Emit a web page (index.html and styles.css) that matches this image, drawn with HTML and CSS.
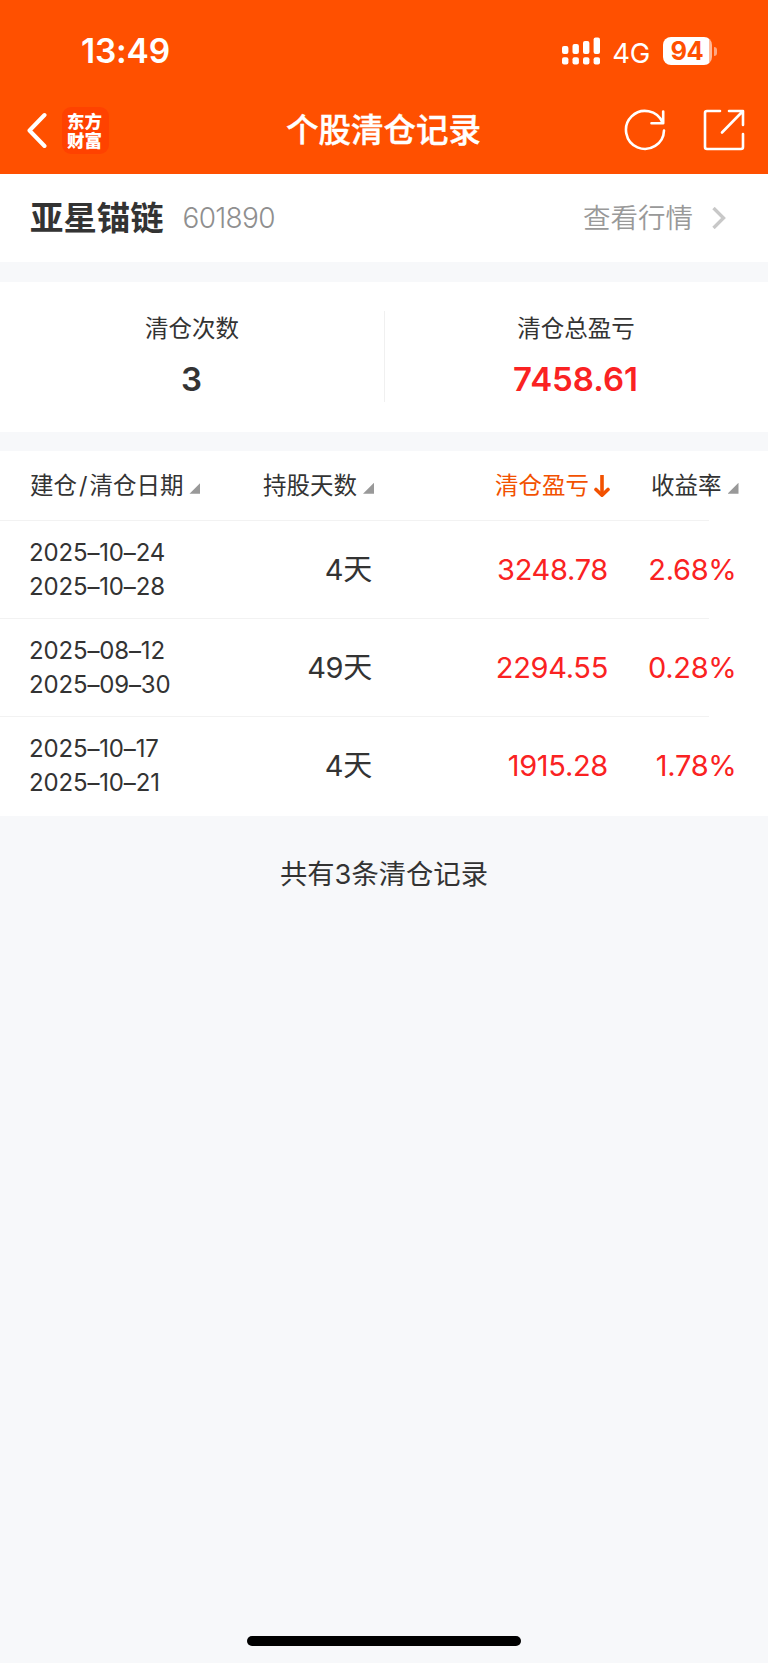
FILE: index.html
```html
<!DOCTYPE html>
<html lang="zh-CN">
<head>
    <meta charset="UTF-8">
    <meta name="viewport" content="width=device-width, initial-scale=1.0">
    <title>个股清仓记录</title>
    <link rel="stylesheet" href="styles.css">
</head>
<body>
    <header>
        <div class="status-bar">
            <span class="time">13:49</span>
            <div class="status-right">
                <svg class="signal" width="39" height="28" viewBox="0 0 39 28" fill="#fff">
                    <rect x="0" y="9" width="6.4" height="8" rx="2"/>
                    <rect x="10.5" y="7" width="6.4" height="10" rx="2"/>
                    <rect x="21" y="4" width="6.4" height="13" rx="2"/>
                    <rect x="31.6" y="0.5" width="6.4" height="16.5" rx="2"/>
                    <rect x="0" y="20.3" width="6.4" height="7.2" rx="2"/>
                    <rect x="10.5" y="20.3" width="6.4" height="7.2" rx="2"/>
                    <rect x="21" y="20.3" width="6.4" height="7.2" rx="2"/>
                    <rect x="31.6" y="20.3" width="6.4" height="7.2" rx="2"/>
                </svg>
                <span class="network">4G</span>
                <div class="battery"><span>94</span></div>
                <div class="battery-cap"></div>
            </div>
        </div>
        <div class="nav-bar">
            <svg class="back" width="22" height="38" viewBox="0 0 22 38" fill="none" stroke="#fff" stroke-width="4" stroke-linecap="round" stroke-linejoin="round">
                <path d="M17.5 4L2.500 19.500L17.500 35"/>
            </svg>
            <div class="logo"><div>东方</div><div>财富</div></div>
            <h1>个股清仓记录</h1>
            <svg class="refresh" width="42" height="42" viewBox="0 0 42 42" fill="none" stroke="#fff" stroke-width="2.6" stroke-linecap="round" stroke-linejoin="round">
                <path d="M40 21.500A19 19 0 1 1 38.500 13.500"/>
                <path d="M39.200 2.500v11.800H27.500"/>
            </svg>
            <svg class="share" width="42" height="42" viewBox="0 0 42 42" fill="none" stroke="#fff" stroke-width="2.6" stroke-linecap="round" stroke-linejoin="round">
                <path d="M17 2H4a2 2 0 0 0-2 2v34a2 2 0 0 0 2 2h34a2 2 0 0 0 2-2V25"/>
                <path d="M26 2h14v14M39 3L19 23.500"/>
            </svg>
        </div>
    </header>

    <section class="stock">
        <h2>亚星锚链</h2>
        <span class="code">601890</span>
        <a class="quote">查看行情</a>
        <svg width="14" height="22" viewBox="0 0 14 22" fill="none" stroke="#c8c8c8" stroke-width="3.4">
            <path d="M1.500 1L11.500 11L1.500 21"/>
        </svg>
    </section>

    <section class="summary">
        <div class="summary-item">
            <p>清仓次数</p>
            <strong>3</strong>
        </div>
        <div class="summary-item">
            <p>清仓总盈亏</p>
            <strong class="red">7458.61</strong>
        </div>
    </section>

    <section class="records">
        <div class="row head">
            <div>建仓<span class="slash">/</span>清仓日期<i class="sort"></i></div>
            <div>持股天数<i class="sort"></i></div>
            <div class="active">清仓盈亏<svg width="16" height="24" viewBox="0 0 16 24" fill="none" stroke="#f25100" stroke-width="3.6" stroke-linecap="round" stroke-linejoin="round">
                <path d="M8 1v20" stroke-linecap="butt"/>
                <path d="M2 15.500L8 21.200L14 15.500"/>
            </svg></div>
            <div>收益率<i class="sort"></i></div>
        </div>
        <div class="row">
            <div class="dates">2025–10–24<br>2025–10–28</div>
            <div>4天</div>
            <div class="red">3248.78</div>
            <div class="red">2.68%</div>
        </div>
        <div class="row">
            <div class="dates">2025–08–12<br>2025–09–30</div>
            <div>49天</div>
            <div class="red">2294.55</div>
            <div class="red">0.28%</div>
        </div>
        <div class="row">
            <div class="dates">2025–10–17<br>2025–10–21</div>
            <div>4天</div>
            <div class="red">1915.28</div>
            <div class="red">1.78%</div>
        </div>
    </section>

    <p class="total">共有3条清仓记录</p>
    <div class="home-indicator"></div>
</body>
</html>
```

FILE: styles.css
```css
* {
    box-sizing: border-box;
}
body {
    font-family: Inter, "Noto Sans CJK SC", sans-serif;
    background: #f7f8fa;
    color: #333;
    margin: 0;
    height: 1663px;
    display: flex;
    flex-direction: column;
    white-space: nowrap;
}
h1, h2, p {
    margin: 0;
}
header {
    height: 173.500px;
    background: #ff5000;
    color: #fff;
}
.status-bar {
    height: 87px;
    padding: 15px 51.500px 0 81px;
    display: flex;
    justify-content: space-between;
    align-items: center;
}
.time {
    font-size: 33.500px;
    font-weight: 600;
    letter-spacing: -0.2px;
}
.status-right {
    display: flex;
    align-items: center;
}
.network {
    font-size: 27.500px;
    letter-spacing: -0.3px;
    margin-left: 11px;
    margin-right: 12.500px;
    line-height: 28px;
    padding-top: 3px;
}
.battery {
    width: 49px;
    height: 28px;
    border-radius: 8px;
    background: linear-gradient(to right, #fff 46px, #ffb999 46px);
    color: #ff5000;
    font-size: 25.500px;
    font-weight: 700;
    line-height: 28px;
    letter-spacing: -0.5px;
    padding-left: 8px;
}
.battery-cap {
    width: 3px;
    height: 9px;
    margin-left: 2px;
    border-radius: 0 3px 3px 0;
    background: #ffa680;
}
.nav-bar {
    height: 86px;
    padding: 0 23px 0 27px;
    display: flex;
    align-items: center;
}
.logo {
    width: 47px;
    height: 47px;
    margin-left: 13px;
    padding: 4px 2px 0 0;
    border-radius: 9px;
    background: #ff4200;
    font-family: "Noto Sans CJK SC", sans-serif;
    font-size: 17.500px;
    font-weight: 900;
    line-height: 19.500px;
    text-align: center;
}
h1 {
    flex: 1;
    padding-top: 2px;
    padding-left: 177px;
    font-size: 32.500px;
    font-weight: 500;
    line-height: 40px;
    -webkit-text-stroke: 0.4px #fff;
}
.share {
    margin-left: 37px;
}
.stock {
    height: 88.500px;
    padding: 0 42px 0 30px;
    background: #fff;
    display: flex;
    align-items: center;
}
.stock h2 {
    font-size: 33.400px;
    line-height: 40px;
    font-weight: 600;
}
.code {
    flex: 1;
    margin-left: 19px;
    font-size: 28px;
    font-weight: 300;
    letter-spacing: -0.7px;
    color: #8f8f8f;
}
.quote {
    font-size: 27.500px;
    font-weight: 350;
    line-height: 34px;
    color: #999;
    margin-right: 19px;
    padding-top: 1px;
}
.summary {
    height: 150px;
    margin: 19.500px 0;
    background: #fff;
    display: flex;
    position: relative;
}
.summary::after {
    content: "";
    position: absolute;
    left: 384px;
    top: 29px;
    width: 1px;
    height: 91px;
    background: #f0f0f0;
}
.summary-item {
    flex: 1;
    text-align: center;
    padding-top: 30px;
}
.summary-item p {
    font-size: 23.500px;
    line-height: 34px;
}
.summary-item strong {
    display: block;
    margin-top: 12px;
    padding-right: 1px;
    font-size: 33px;
    line-height: 42px;
    font-weight: 600;
}
.red {
    color: #fa2222;
}
.records {
    background: #fff;
}
.row {
    height: 98.400px;
    padding-left: 30px;
    display: grid;
    grid-template-columns: 200px 144px 236px 128.500px;
    align-items: center;
    font-size: 29px;
    letter-spacing: -0.3px;
    background: linear-gradient(#f2f2f2, #f2f2f2) left bottom / 709px 1px no-repeat;
}
.row:last-child {
    background: none;
}
.row > div {
    text-align: right;
    padding-right: 2px;
    line-height: 34px;
}
.row > .dates {
    margin-left: -1px;
    font-size: 24px;
    letter-spacing: -0.15px;
    text-align: left;
}
.head {
    height: 69.500px;
    font-size: 23.500px;
    letter-spacing: 0;
}
.head > div {
    display: flex;
    justify-content: flex-end;
    align-items: center;
    padding-right: 0;
}
.head > div:first-child {
    justify-content: flex-start;
}
.slash {
    padding: 0 2px;
}
.head .active {
    color: #f25100;
}
.head svg {
    margin-left: 5px;
}
.sort {
    width: 11px;
    height: 11px;
    margin-left: 6px;
    margin-top: 5px;
    background: #999;
    clip-path: polygon(100% 0, 100% 100%, 0 100%);
}
.total {
    margin-top: 39px;
    font-size: 27.300px;
    line-height: 40px;
    text-align: center;
}
.home-indicator {
    width: 274px;
    height: 10px;
    margin: auto auto 17px;
    border-radius: 5px;
    background: #000;
}
```
